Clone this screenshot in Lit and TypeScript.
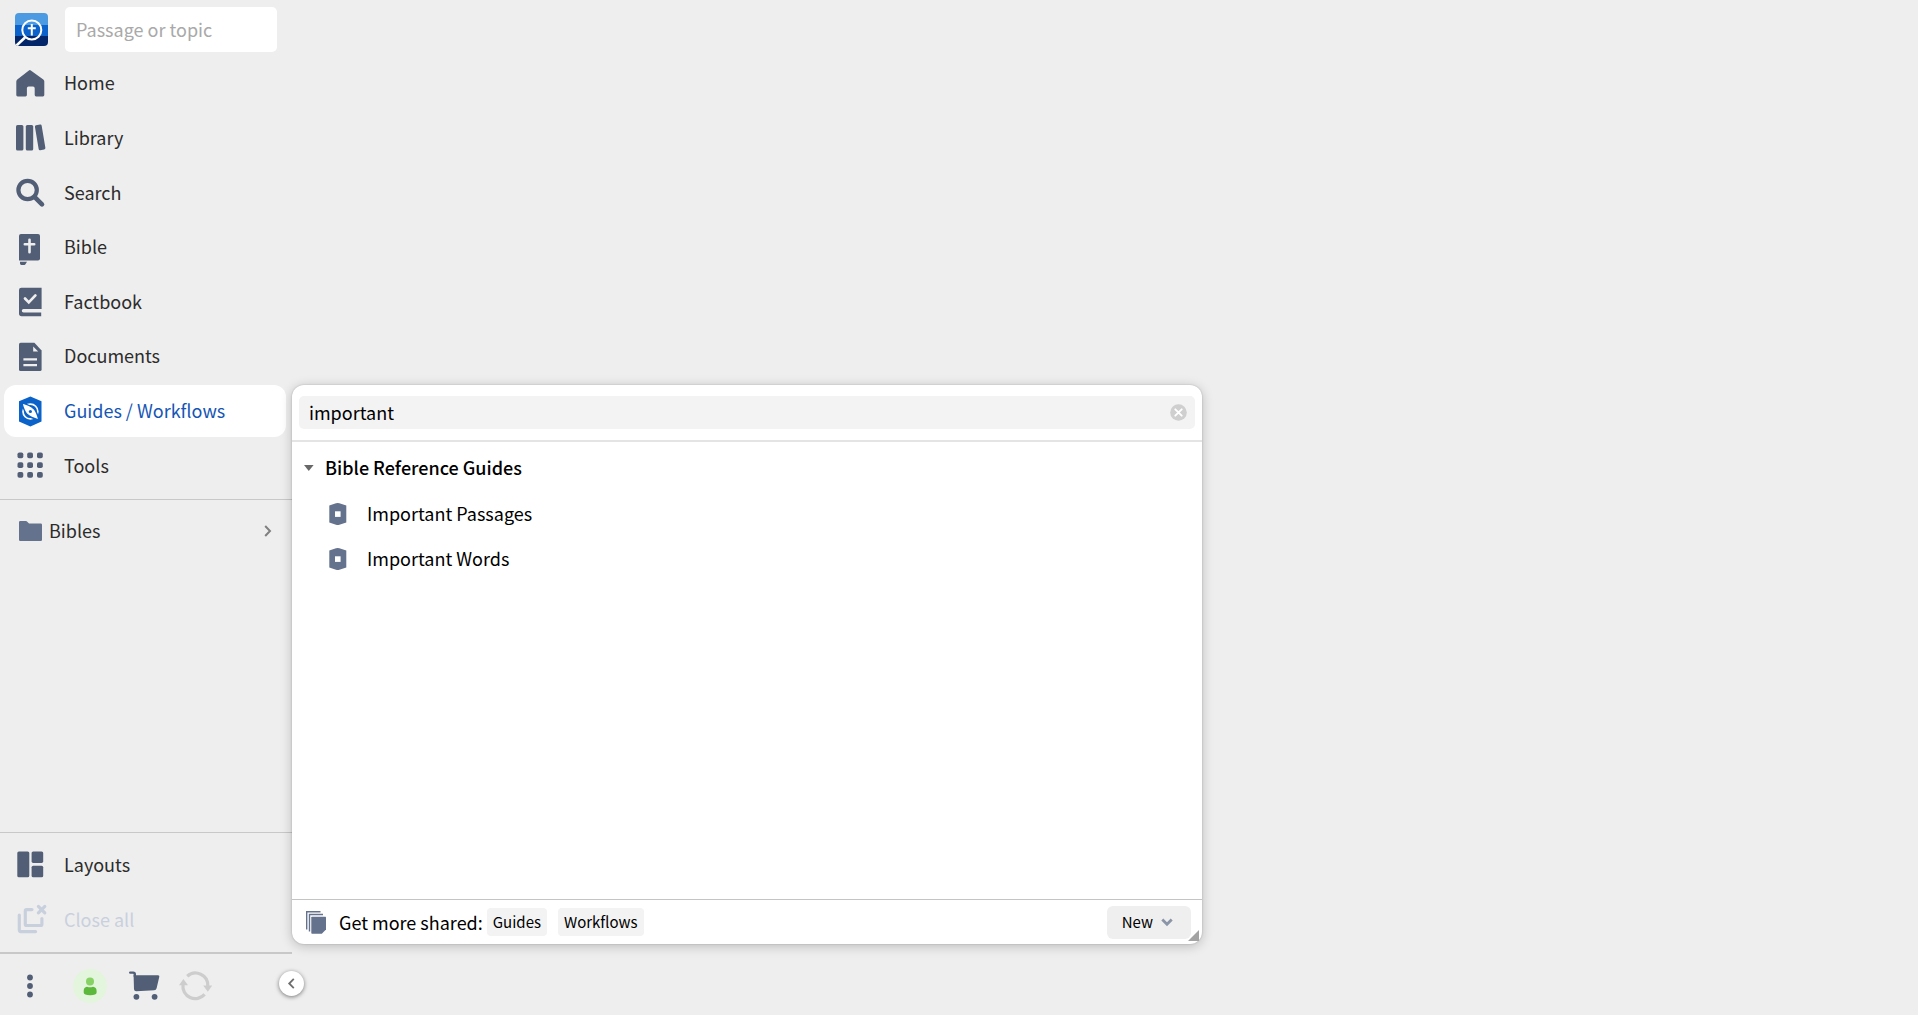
import { LitElement, html, css, svg, type TemplateResult } from "lit";
import { customElement, state } from "lit/decorators.js";
import { classMap } from "lit/directives/class-map.js";

const ink = "#515e76";
const slate = "#64728d";

const icons: Record<string, TemplateResult> = {
  home: svg`<path fill=${ink} d="M14.8 1.4 27.3 10.4Q28.3 11.2 28.3 12.5V26Q28.3 27.4 26.9 27.4H20.1Q18.7 27.4 18.7 26V19.3Q18.7 17.6 17 17.6H12.6Q10.9 17.6 10.9 19.3V26Q10.9 27.4 9.5 27.4H1.7Q.3 27.4.3 26V12.5Q.3 11.2 1.3 10.4L12.9 1.4Q14 .6 14.8 1.4Z" />`,
  library: svg`<g fill=${ink}><rect x="0" y="2" width="7.4" height="25.5" rx="1.6" /><rect x="9.8" y="2" width="7.4" height="25.5" rx="1.6" /><rect x="20.8" y="1.8" width="6.8" height="25.2" rx="1.4" transform="rotate(-9.5 24 14.6)" /></g>`,
  search: svg`<g fill="none" stroke=${ink} stroke-width="4.2" stroke-linecap="round"><circle cx="11.6" cy="12" r="9.2" /><path d="m19 19.4 7 7" stroke-width="4.6" /></g>`,
  bible: svg`<path fill=${ink} d="M5 1H22a2 2 0 0 1 2 2V25.6a2 2 0 0 1-2 2H3V3a2 2 0 0 1 2-2Z" /><path fill=${ink} d="M4 28.8H11L9.6 31Q9.2 31.9 8.2 31.9H5.4Q4 31.9 4 30.5Z" /><path d="M13.5 6.8V19.2M8.8 11.2h9.4" stroke="#eee" stroke-width="2.6" stroke-linecap="round" />`,
  factbook: svg`<path fill=${ink} d="M5.4.8H25.6V22H7.6Q5.8 22 5.8 23.7T7.6 25.6H25.2V29.2H5.6Q3 29.2 3 26.6V3Q3 .8 5.4.8Z" /><path d="M24.4 23.7H7.8" stroke="#eee" stroke-width="2.3" stroke-linecap="round" /><path d="m9 11.5 3.8 3.9 6.6-7" fill="none" stroke="#eee" stroke-width="2.7" stroke-linecap="round" />`,
  documents: svg`<path fill=${ink} d="M4.6.8H18.4L25.6 8.6V27.4Q25.6 29 24 29H4.6Q3 29 3 27.4V2.4Q3 .8 4.6.8Z" /><path d="M17.2 4.5V9.6H22.2Z" fill="#eee" /><path d="M7.4 17.4H21M7.4 23.2H21" stroke="#eee" stroke-width="2.3" />`,
  guides: svg`<path fill="#0b62c8" d="M14.4-.6 25.5 4.2V24.6L14.4 29.6 3 24.6V4.2Z" /><circle cx="14.4" cy="14.5" r="7.400" fill="none" stroke="#fff" stroke-width="1.700" /><path fill="#fff" stroke="#0b62c8" stroke-width="1.500" d="M5.800 5.900Q14.500 8.400 17.900 11.600 20.800 14.600 23 23.100 14.300 20.600 10.900 17.400 8 14.400 5.800 5.900Z" /><circle cx="14.4" cy="14.5" r="1.600" fill="#0b62c8" />`,
  tools: svg`<g fill=${ink}>${[1.5, 11.2, 21].map((y) => [1.5, 11.2, 21].map((x) => svg`<rect x=${x} y=${y} width="5.8" height="5.8" rx="1.8" />`))}</g>`,
  layouts: svg`<g fill=${ink}><rect x="1.3" y="1.5" width="12" height="25.8" rx="1.6" /><rect x="15.6" y="1.5" width="11.6" height="11.4" rx="1.6" /><rect x="15.6" y="15.7" width="11.6" height="11.6" rx="1.6" /></g>`,
  closeAll: svg`<g fill="none" stroke="#c9d0dd" stroke-width="3.200" stroke-linecap="round" stroke-linejoin="round"><path d="M16 4.600H10.600Q9.300 4.600 9.300 5.900V19.200Q9.300 20.500 10.600 20.500H24.600Q25.900 20.500 25.900 19.200V13.600" /><path d="M3.300 10V25.100Q3.300 26.600 4.700 26.600H19.600" /><path d="m22.4 1.4 6.400 6.400M28.800 1.4l-6.400 6.400" /></g>`,
};

const navItems = [
  { id: "home", label: "Home" },
  { id: "library", label: "Library" },
  { id: "search", label: "Search" },
  { id: "bible", label: "Bible" },
  { id: "factbook", label: "Factbook" },
  { id: "documents", label: "Documents" },
  { id: "guides", label: "Guides / Workflows" },
  { id: "tools", label: "Tools" },
];

@customElement("app-root")
export class AppRoot extends LitElement {
  @state() private active = "guides";
  @state() private expanded = true;
  @state() private query = "important";

  static styles = css`
    :host {
      display: block;
      min-height: 100vh;
      background: #eee;
      color: #2c2c2c;
      font: 18px/24px "Noto Sans CJK SC", "Noto Sans", sans-serif;
    }
    *, *::before { box-sizing: border-box; }
    button, input { font: inherit; color: inherit; border: 0; margin: 0; padding: 0; background: none; }
    button { cursor: pointer; text-align: left; }
    svg { display: block; overflow: visible; flex: none; }
    .shell { display: grid; grid-template-columns: 292px minmax(0, 1fr); min-height: 100vh; }
    .sidebar { position: relative; display: flex; flex-direction: column; }
    .top { display: flex; align-items: center; gap: 16px; padding: 7px 15px 5px; }
    .top .passage {
      flex: 1; min-width: 0; height: 45px; padding: 0 12px 2px 11px;
      background: #fff; border-radius: 5px; margin-left: 1px;
    }
    .passage::placeholder { color: #a9a9a9; opacity: 1; }
    .nav { display: grid; grid-auto-rows: 1fr; gap: 2px; min-height: 435px; padding: 0 6px 0 4px; }
    .item { display: flex; align-items: center; gap: 20px; width: 100%; min-height: 52px; padding: 0 12px; border-radius: 12px; }
    .label { padding-bottom: 2px; }
    .item.active { background: #fff; color: #1556b5; }
    .item:disabled { color: #c9d0dd; cursor: default; }
    .favorites { border-top: 1px solid #c8c8c8; margin-top: 7px; padding: 4px 0; flex: 1; }
    .folder { display: flex; align-items: center; gap: 7px; width: 100%; height: 54px; padding: 0 20px 0 19px; }
    .folder .name { flex: 1; padding-bottom: 2px; }
    .windows { border-top: 1px solid #c8c8c8; padding: 5px 6px 6px 4px; display: grid; gap: 2px; }
    .item.tall { height: 53px; }
    .status { border-top: 2px solid #c8c8c8; height: 63px; padding: 2px 0 0 16px; display: flex; align-items: center; }
    .status button { display: grid; place-items: center; height: 36px; }
    .more { width: 28px; }
    .account { width: 34px; margin-left: 29px; }
    .cart { width: 34px; margin-left: 20px; }
    .sync { width: 36px; margin-left: 16px; }
    .status .collapse {
      position: absolute; right: -12px; bottom: 19px; width: 25px; height: 25px;
      border-radius: 50%; background: #fff; box-shadow: 0 1px 4px rgba(0, 0, 0, 0.5);
    }
    .popup {
      position: absolute; left: 100%; bottom: 71px; z-index: 1;
      width: min(910px, calc(100vw - 300px)); height: min(559px, calc(100vh - 80px));
      display: flex; flex-direction: column;
      background: #fff; color: #000; border-radius: 12px;
      box-shadow: 0 2px 12px rgba(0, 0, 0, 0.22), 0 0 2px rgba(0, 0, 0, 0.2);
    }
    .find { padding: 11px 7px; border-bottom: 2px solid #e4e4e4; }
    .field { display: flex; align-items: center; height: 33px; padding: 0 8px 0 10px; background: #f3f3f3; border-radius: 5px; }
    .field input { flex: 1; min-width: 0; height: 33px; padding-bottom: 2px; outline: none; }
    .results { flex: 1; padding: 3px 0; }
    .group { display: flex; align-items: center; gap: 11px; width: 100%; height: 46px; padding: 0 12px; font-weight: 500; }
    .list { list-style: none; margin: 0; padding: 0; }
    .result { display: flex; align-items: center; gap: 20px; width: 100%; height: 45px; padding: 0 37px; }
    .closed { transform: rotate(-90deg); }
    .footer { position: relative; display: flex; align-items: center; height: 45px; padding: 0 11px 0 14px; border-top: 1px solid #c4c4c4; }
    .shared { margin: 0 4px 0 13px; }
    .chip { height: 28px; padding: 0 6px; margin-right: 11px; border-radius: 4px; background: #f3f3f3; color: #000; font-size: 15px; line-height: 28px; text-decoration: none; }
    .new { display: flex; align-items: center; gap: 8px; height: 33px; margin-left: auto; padding: 0 18px 0 15px; border-radius: 6px; background: #efefef; font-size: 15px; }
    .grip { position: absolute; right: 3px; bottom: 3px; }
  `;

  private renderItem(id: string, label: string, disabled = false, tall = false) {
    return html`<button
      class=${classMap({ item: true, tall, active: id === this.active })}
      ?disabled=${disabled}
      @click=${() => (this.active = id)}
    >
      <svg width="28" height="29" viewBox="0 0 28 29" aria-hidden="true">${icons[id]}</svg>
      <span class="label">${label}</span>
    </button>`;
  }

  private renderResult(label: string) {
    return html`<li>
      <button class="result">
        <svg width="18" height="22" viewBox="0 0 18 22" aria-hidden="true">
          <path fill=${slate} d="M.3 2.600 7 .3Q8.700-.1 10.400.3L17.300 2.600V19.600L10.400 21.700Q8.700 22.100 7 21.700L.3 19.600Z" />
          <rect x="6" y="8.300" width="5.600" height="5.600" fill="#fff" />
        </svg>
        <span class="label">${label}</span>
      </button>
    </li>`;
  }

  private renderPopup() {
    const matches = ["Important Passages", "Important Words"].filter((name) =>
      name.toLowerCase().includes(this.query.toLowerCase()),
    );
    return html`<section class="popup" aria-label="Guides / Workflows">
      <div class="find">
        <div class="field">
          <input
            type="text"
            aria-label="Find guides and workflows"
            .value=${this.query}
            @input=${(e: InputEvent) => (this.query = (e.target as HTMLInputElement).value)}
          />
          <button aria-label="Clear" @click=${() => (this.query = "")}>
            <svg width="17" height="17" viewBox="0 0 17 17">
              <circle cx="8.500" cy="8.500" r="8.300" fill="#cfcfcf" />
              <path d="m5.300 5.300 6.400 6.400m0-6.400-6.400 6.400" stroke="#fff" stroke-width="1.900" stroke-linecap="round" />
            </svg>
          </button>
        </div>
      </div>
      <div class="results">
        <button class="group" aria-expanded=${this.expanded} @click=${() => (this.expanded = !this.expanded)}>
          <svg class=${classMap({ closed: !this.expanded })} width="10" height="6" viewBox="0 0 10 6" aria-hidden="true">
            <path d="M0 0H9.600L4.800 6Z" fill="#686868" />
          </svg>
          <span class="label">Bible Reference Guides</span>
        </button>
        ${this.expanded ? html`<ul class="list">${matches.map((m) => this.renderResult(m))}</ul>` : ""}
      </div>
      <div class="footer">
        <svg width="20" height="23" viewBox="0 0 20 23" aria-hidden="true">
          <path d="M.7 18.500V.7H14.500M3.500 20.500V3.500H17" fill="none" stroke=${slate} stroke-width="1.400" />
          <path d="M5.300 6.200Q5.300 5.700 6 5.700H19.500Q20 5.700 20 6.300V18.500L15.800 22.800H6Q5.300 22.800 5.300 22Z" fill=${slate} />
        </svg>
        <span class="shared">Get more shared:</span>
        <a class="chip" href="#guides">Guides</a>
        <a class="chip" href="#workflows">Workflows</a>
        <button class="new">
          <span>New</span>
          <svg width="12" height="8" viewBox="0 0 12 8" aria-hidden="true">
            <path d="m1.300 1.500 4.700 4.700 4.700-4.700" fill="none" stroke="#8b95a8" stroke-width="2.800" />
          </svg>
        </button>
        <svg class="grip" width="11" height="11" viewBox="0 0 11 11" aria-hidden="true"><path d="M11 0V11H0Z" fill="#a3a3a3" /></svg>
      </div>
    </section>`;
  }

  render() {
    return html`<div class="shell">
      <aside class="sidebar">
        <div class="top">
          <svg width="33" height="33" viewBox="0 0 33 33" role="img" aria-label="Logo">
            <defs><clipPath id="tile"><rect width="33" height="33" rx="4" /></clipPath></defs>
            <g clip-path="url(#tile)">
              <path fill="#4c9be2" d="M0 0H33V12H0Z" />
              <path fill="#0c62cb" d="M0 12H33V23H0Z" />
              <path fill="#03266b" d="M0 23H33V33H0Z" />
              <path d="M10 24.500 1 33" stroke="#fff" stroke-width="2.600" />
            </g>
            <circle cx="16.800" cy="17" r="9.400" fill="#0c62cb" />
            <path d="M8.900 12A9.400 9.400 0 0 1 24.700 12Z" fill="#4c9be2" />
            <path d="M9.600 23A9.400 9.400 0 0 0 24 23Z" fill="#03266b" />
            <circle cx="16.800" cy="17" r="9.500" fill="none" stroke="#fff" stroke-width="2" />
            <path d="M16.800 11V22.500M12.800 15.200H20.800" stroke="#fff" stroke-width="2" />
          </svg>
          <input class="passage" type="text" placeholder="Passage or topic" aria-label="Passage or topic" />
        </div>
        <nav class="nav" aria-label="Main">${navItems.map((n) => this.renderItem(n.id, n.label))}</nav>
        <div class="favorites">
          <button class="folder">
            <svg width="23" height="20" viewBox="0 0 23 20" aria-hidden="true">
              <path d="M1.200 0H7Q7.600 0 8 .4L10 2.600H21.800Q23 2.600 23 3.800V18.800Q23 20 21.800 20H1.200Q0 20 0 18.800V1.200Q0 0 1.200 0Z" fill=${slate} />
            </svg>
            <span class="name">Bibles</span>
            <svg width="8" height="12" viewBox="0 0 8 12" aria-hidden="true"><path d="m1.200 1 4.800 5-4.800 5" fill="none" stroke="#808080" stroke-width="2" /></svg>
          </button>
        </div>
        <div class="windows">
          ${this.renderItem("layouts", "Layouts", false, true)} ${this.renderItem("closeAll", "Close all", true, true)}
        </div>
        <div class="status">
          <button class="more" aria-label="More">
            <svg width="6" height="24" viewBox="0 0 6 24"><g fill=${ink}><circle cx="3" cy="3.500" r="2.900" /><circle cx="3" cy="12" r="2.900" /><circle cx="3" cy="20.500" r="2.900" /></g></svg>
          </button>
          <button class="account" aria-label="Account">
            <svg width="34" height="34" viewBox="0 0 34 34">
              <circle cx="17" cy="17" r="17" fill="#e3f5dc" />
              <circle cx="17" cy="12.500" r="4" fill="#86d265" />
              <path d="M10.700 22Q10.700 18 14 17.700 17 19 20 17.700 23.600 18 23.600 22V23.500Q23.600 26.300 17.200 26.300T10.700 23.500Z" fill="#5cb83a" />
            </svg>
          </button>
          <button class="cart" aria-label="Cart">
            <svg width="31" height="29" viewBox="0 0 31 29">
              <path d="M1.200 1.600H4.200Q5.800 1.600 5.800 3.200V5" fill="none" stroke=${ink} stroke-width="2.400" stroke-linecap="round" />
              <path d="M4.600 4.200H29Q30.700 4.200 30.300 5.800L27.600 17.200Q27.100 19.200 25.200 19.300L7.200 20.200Q5.200 20.200 5 18.200Z" fill=${ink} />
              <circle cx="7.400" cy="25.800" r="2.900" fill=${ink} /><circle cx="25.600" cy="25.800" r="2.900" fill=${ink} />
            </svg>
          </button>
          <button class="sync" aria-label="Sync">
            <svg width="33" height="28" viewBox="0 0 33 28">
              <g fill="none" stroke="#cdcdcd" stroke-width="3.200"><path d="M8.200 4.200A12.400 12.400 0 0 1 28.800 14" /><path d="M4 12.500A12.400 12.400 0 0 0 25.600 22.400" /></g>
              <path d="M0 13.200 4.400 7 9 13.200ZM24.200 13.600H33.200L28.800 19.800Z" fill="#cdcdcd" />
            </svg>
          </button>
          <button class="collapse" aria-label="Collapse sidebar">
            <svg width="7" height="11" viewBox="0 0 7 11"><path d="M5.800.8 1.200 5.500l4.600 4.700" fill="none" stroke="#6e6e6e" stroke-width="1.800" /></svg>
          </button>
        </div>
        ${this.active === "guides" ? this.renderPopup() : ""}
      </aside>
      <main></main>
    </div>`;
  }
}
